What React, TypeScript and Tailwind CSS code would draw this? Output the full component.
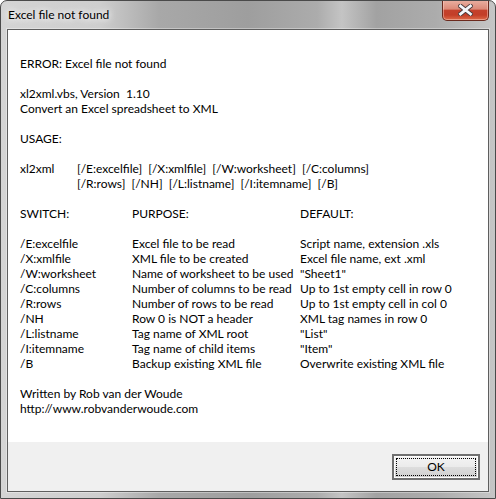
import { FC } from "react";

const switches: [string, string, string][] = [
  ["/E:excelfile", "Excel file to be read", "Script name, extension .xls"],
  ["/X:xmlfile", "XML file to be created", "Excel file name, ext .xml"],
  ["/W:worksheet", "Name of worksheet to be used", "\"Sheet1\""],
  ["/C:columns", "Number of columns to be read", "Up to 1st empty cell in row 0"],
  ["/R:rows", "Number of rows to be read", "Up to 1st empty cell in col 0"],
  ["/NH", "Row 0 is NOT a header", "XML tag names in row 0"],
  ["/L:listname", "Tag name of XML root", "\"List\""],
  ["/I:itemname", "Tag name of child items", "\"Item\""],
  ["/B", "Backup existing XML file", "Overwrite existing XML file"],
];

const Blank: FC = () => <div className="h-[15px]" />;

const Line: FC<{ children: React.ReactNode }> = ({ children }) => (
  <div className="h-[15px] whitespace-pre">{children}</div>
);

const Row: FC<{ cells: [string, string, string] }> = ({ cells }) => (
  <div className="grid h-[15px] grid-cols-[112px_168px_1fr] whitespace-pre">
    <span>{cells[0]}</span>
    <span>{cells[1]}</span>
    <span>{cells[2]}</span>
  </div>
);

const CloseButton: FC = () => (
  <div className="absolute -top-px right-[6px] flex h-[21px] w-[47px] items-center justify-center rounded-b-[5px] border border-t-0 border-[#6b2a1e] bg-[linear-gradient(to_bottom,#eab1a3_0%,#dc8a78_45%,#c4412c_52%,#c33e28_75%,#de6a48_100%)] shadow-[inset_0_0_0_1px_rgba(255,220,210,0.45)]">
    <svg width="15" height="12" viewBox="0 0 15 12">
      <path
        d="M2.5 2 L12.5 10 M12.5 2 L2.5 10"
        stroke="#4a3a3a"
        strokeWidth="4.6"
        strokeLinecap="square"
        fill="none"
      />
      <path
        d="M2.5 2 L12.5 10 M12.5 2 L2.5 10"
        stroke="#f4f6fa"
        strokeWidth="2.8"
        strokeLinecap="square"
        fill="none"
      />
    </svg>
  </div>
);

export default function App() {
  return (
    <div className="relative flex h-[499px] w-[496px] flex-col overflow-hidden rounded-t-[7px] border border-[#4a4a4a] bg-[linear-gradient(to_right,#d4d4d4_0%,#cecece_20%,#a8a8a8_32%,#9e9e9e_50%,#acacac_64%,#c4c4c4_69%,#a2a2a2_76%,#acacac_88%,#c6c6c6_100%)] font-[Lato,sans-serif] text-[12px] text-black">
      {/* title bar */}
      <div className="flex h-[28px] shrink-0 items-center pl-[7px]">
        <span className="[text-shadow:0_0_6px_#fff,0_0_10px_#fff]">Excel file not found</span>
      </div>
      <CloseButton />

      {/* client area */}
      <div className="mx-[6px] mb-[6px] flex flex-1 flex-col border border-[#5e5e5e] bg-white shadow-[0_0_0_1px_rgba(255,255,255,0.35)]">
        <div className="flex-1 px-[12px] pt-[26px] leading-[15px]">
          <Line>ERROR: Excel file not found</Line>
          <Blank />
          <Line>xl2xml.vbs, Version  1.10</Line>
          <Line>Convert an Excel spreadsheet to XML</Line>
          <Blank />
          <Line>USAGE:</Line>
          <Blank />
          <div className="grid grid-cols-[57px_1fr] whitespace-pre">
            <span>xl2xml</span>
            <span>[/E:excelfile]  [/X:xmlfile]  [/W:worksheet]  [/C:columns]</span>
            <span />
            <span>[/R:rows]  [/NH]  [/L:listname]  [/I:itemname]  [/B]</span>
          </div>
          <Blank />
          <Row cells={["SWITCH:", "PURPOSE:", "DEFAULT:"]} />
          <Blank />
          {switches.map((s) => (
            <Row key={s[0]} cells={s} />
          ))}
          <Blank />
          <Line>Written by Rob van der Woude</Line>
          <Line>http://www.robvanderwoude.com</Line>
        </div>

        {/* footer */}
        <div className="flex h-[49px] shrink-0 items-start justify-end bg-[#f0f0f0] pr-[8px] pt-[12px]">
          <button className="flex h-[26px] w-[88px] items-center justify-center border-2 border-[#707070] bg-[linear-gradient(to_bottom,#f4f4f4_0%,#ebebeb_50%,#dddddd_51%,#cfcfcf_100%)] p-[2px] shadow-[inset_0_0_0_1px_#fcfcfc]">
            <span className="flex h-full w-full items-center justify-center border border-dotted border-black leading-none">
              OK
            </span>
          </button>
        </div>
      </div>
    </div>
  );
}
